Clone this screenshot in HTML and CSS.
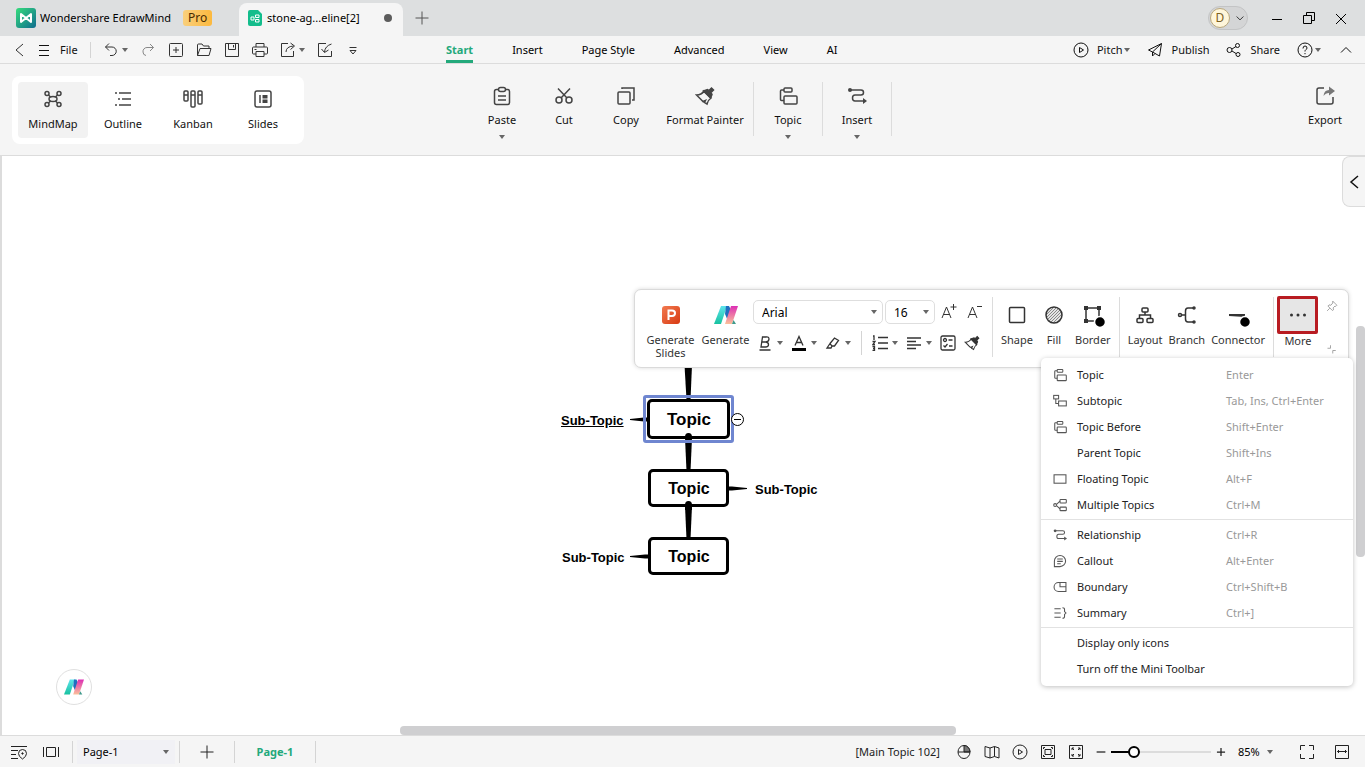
FILE: index.html
```html
<!DOCTYPE html>
<html lang="en">
<head>
    <meta charset="UTF-8">
    <meta name="viewport" content="width=device-width, initial-scale=1.0">
    <title>Wondershare EdrawMind</title>
    <link rel="stylesheet" href="styles.css">
</head>
<body>
    <!-- Icon sprite -->
    <svg class="sprite" aria-hidden="true">
        <defs>
            <linearGradient id="g-app" x1="0" y1="0" x2="1" y2="1">
                <stop offset="0" stop-color="#35dc7c"/><stop offset="1" stop-color="#0f6c8f"/>
            </linearGradient>
            <linearGradient id="g-ppt" x1="0" y1="0" x2="1" y2="1">
                <stop offset="0" stop-color="#f27a50"/><stop offset="1" stop-color="#d83a12"/>
            </linearGradient>
            <linearGradient id="g-teal" x1="0" y1="0" x2="0" y2="1">
                <stop offset="0" stop-color="#5ee3ec"/><stop offset="1" stop-color="#18c2a0"/>
            </linearGradient>
            <linearGradient id="g-pink" x1="0" y1="0" x2="0" y2="1">
                <stop offset="0" stop-color="#dd2fb4"/><stop offset="1" stop-color="#fbc09a"/>
            </linearGradient>
            <pattern id="hatch" width="3" height="3" patternUnits="userSpaceOnUse">
                <rect width="3" height="3" fill="#e4e4e4"/>
                <path d="M0 3L3 0" stroke="#888" stroke-width="1"/>
            </pattern>
        </defs>
        <symbol id="i-ai" viewBox="0 0 24 18">
            <path d="M7 0h6L7 18H0z" fill="url(#g-teal)"/>
            <path d="M12 0h3l4 8-5 7-3-7z" fill="#1f6fc0"/>
            <path d="M17 0h7l-6 18h-7z" fill="url(#g-pink)"/>
            <path d="M18 18l1.500-4 2.500 4z" fill="#3f9a8c"/>
        </symbol>
        <symbol id="i-caret" viewBox="0 0 6 4"><path d="M0 0h6L3 4z" fill="#666" stroke="none"/></symbol>
        <symbol id="i-back" viewBox="0 0 16 16"><path d="M12 2L5 8l7 6"/></symbol>
        <symbol id="i-menu" viewBox="0 0 16 16"><path d="M3 3.500h10M3 8.500h10M3 13.500h10"/></symbol>
        <symbol id="i-undo" viewBox="0 0 16 16"><path d="M6 1.500L2.500 5 6 8.500M2.500 5H9a4 4 0 0 1 0 8.500H7"/></symbol>
        <symbol id="i-redo" viewBox="0 0 16 16"><path d="M10 2l3.500 3.500L10 9M13.500 5.500H7a4 4 0 0 0-4 4.500q0 3 3 3.500"/></symbol>
        <symbol id="i-new" viewBox="0 0 16 16"><rect x="1.500" y="1.500" width="13" height="13" rx="1"/><path d="M8 5v6M5 8h6"/></symbol>
        <symbol id="i-open" viewBox="0 0 16 16"><path d="M1.500 13.500V3q0-1 1-1h3.500l1.500 2h5.500v2.500M1.500 13.500L4 6.500h11l-2 7z"/></symbol>
        <symbol id="i-save" viewBox="0 0 16 16"><path d="M1.500 1.500h13v13h-13zM4.500 1.500v6h7v-6M9.500 3v2.500"/></symbol>
        <symbol id="i-print" viewBox="0 0 16 16"><path d="M4 5V1.500h8V5M4 12H1.500q-1 0-1-1V6q0-1 1-1h13q1 0 1 1v5q0 1-1 1H12M4 9.500h8v5H4zM2.500 7.500h2"/></symbol>
        <symbol id="i-exportfile" viewBox="0 0 16 16"><path d="M8 1.500H1.500v13h12V9M6 10q0-5.500 7.500-6M10.500 1l4 3-4 3.500"/></symbol>
        <symbol id="i-import" viewBox="0 0 16 16"><path d="M9 1.500H1.500v13h13V9M14.500 2Q8 4 7.500 10M4.500 7l3 3.500 4-2.500"/></symbol>
        <symbol id="i-more-down" viewBox="0 0 16 16"><path d="M4.500 5.500h7M5 8.500h6L8 12z"/></symbol>
        <symbol id="i-play" viewBox="0 0 16 16"><circle cx="8" cy="8" r="7"/><path d="M6.500 5.500L10.500 8l-4 2.500z"/></symbol>
        <symbol id="i-send" viewBox="0 0 16 16"><path d="M1.500 8L14.500 1.500 12.500 14 5.500 10zM14.500 1.500L5.500 10v4l2.500-2.500"/></symbol>
        <symbol id="i-share" viewBox="0 0 16 16"><circle cx="3.500" cy="8" r="2.500"/><circle cx="11.500" cy="3.500" r="2"/><circle cx="12" cy="12.500" r="2"/><path d="M6 7l4-2.500M6 9l4 2.500"/></symbol>
        <symbol id="i-help" viewBox="0 0 16 16"><circle cx="8" cy="8" r="7"/><path d="M6 6.500q0-2.500 2-2.500t2 2q0 1-1 1.500T8 9.500M8 11v1.200"/></symbol>
        <symbol id="i-up" viewBox="0 0 16 16"><path d="M3 10.500L8 5.500l5 5"/></symbol>
        <symbol id="i-down" viewBox="0 0 16 16"><path d="M3.500 6L8 10.500 12.500 6"/></symbol>
        <symbol id="i-min" viewBox="0 0 16 16"><path d="M3 9.500h10"/></symbol>
        <symbol id="i-restore" viewBox="0 0 16 16"><path d="M2.500 5.500h8v8h-8zM5.500 5.500v-3h8v8h-3"/></symbol>
        <symbol id="i-close" viewBox="0 0 16 16"><path d="M3 4l10 10M13 4L3 14"/></symbol>
        <symbol id="i-plus" viewBox="0 0 16 16"><path d="M8 1.500v13M1.500 8h13"/></symbol>
        <symbol id="i-minus" viewBox="0 0 16 16"><path d="M1 8h14"/></symbol>

        <symbol id="i-mindmap" viewBox="0 0 20 20"><ellipse cx="10" cy="10" rx="4" ry="2.500"/><circle cx="4" cy="4.500" r="2"/><circle cx="16" cy="4.500" r="2"/><circle cx="4" cy="15.500" r="2"/><circle cx="16" cy="15.500" r="2"/><path d="M5.500 6l2 2M14.500 6l-2 2M5.500 14l2-2M14.500 14l-2-2"/></symbol>
        <symbol id="i-outline" viewBox="0 0 20 20"><path d="M2 4h2M6 4h12M5 10h2M9 10h9M2 16h2M6 16h12"/></symbol>
        <symbol id="i-kanban" viewBox="0 0 20 20"><rect x="1" y="2" width="4" height="10" rx="1"/><rect x="8" y="2" width="4" height="16" rx="1"/><rect x="15" y="2" width="4" height="13" rx="1"/><path d="M1 6h4M8 6h4M15 6h4"/></symbol>
        <symbol id="i-slides" viewBox="0 0 20 20"><rect x="2" y="2" width="16" height="16" rx="2"/><path d="M7 6v8"/><path d="M9.500 6h5v3.500h-5zM9.500 10.500h5V14h-5z" fill="currentColor" stroke="none"/></symbol>
        <symbol id="i-paste" viewBox="0 0 20 20"><rect x="2.500" y="3.500" width="15" height="15" rx="2"/><rect x="6.500" y="1.500" width="7" height="4" rx="2" fill="#f5f5f5"/><path d="M6 10h8M6 14h8"/></symbol>
        <symbol id="i-cut" viewBox="0 0 20 20"><circle cx="5" cy="14" r="3"/><circle cx="15" cy="14" r="3"/><path d="M4 2.500l9 9.500M16 2.500L7 12"/></symbol>
        <symbol id="i-copy" viewBox="0 0 20 20"><rect x="2" y="6" width="12" height="12" rx="1"/><path d="M6 3V2h12v12h-2"/></symbol>
        <symbol id="i-brush" viewBox="0 0 20 20"><path d="M1.500 9q5 0 7.500-4l7 7q-3 2-4 6l-2.500-1.500 1-2-2.500 1L6 13.500 1.500 9z"/><path d="M8.500 5l4-1.500 1.500 1 2.500-2.500 2 2L16 6.500l1 2L15.500 12z" fill="currentColor"/></symbol>
        <symbol id="i-topic" viewBox="0 0 20 20"><rect x="6" y="2" width="8" height="4" rx="1"/><rect x="6" y="10" width="13" height="8" rx="1"/><path d="M6 4H3.500q-1 0-1 1v8.500q0 1 1 1H6"/></symbol>
        <symbol id="i-subtopic" viewBox="0 0 20 20"><rect x="1" y="2" width="7" height="5"/><rect x="8" y="10" width="11" height="7"/><path d="M4 7v6.500h4"/></symbol>
        <symbol id="i-relation" viewBox="0 0 20 20"><path d="M3 4h11q2.500 0 2.500 2.500T14 9H8q-2.500 0-2.500 3T8 15h9"/><circle cx="3" cy="4" r="2" fill="currentColor" stroke="none"/><path d="M16 12l4 3-4 3z" fill="currentColor" stroke="none"/></symbol>
        <symbol id="i-export" viewBox="0 0 20 20"><path d="M9 2H4q-2 0-2 2v12q0 2 2 2h12q2 0 2-2v-5"/><path d="M8.500 10q.5-6 5.500-6V.5L20 5l-6 4.500V7q-3.500 0-5.500 3z" fill="#777" stroke="none"/></symbol>

        <symbol id="i-grow" viewBox="0 0 16 16"><path d="M1 14L5.500 3 10 14M2.500 10.500h6M12.500 0v6M9.500 3h6"/></symbol>
        <symbol id="i-shrink" viewBox="0 0 16 16"><path d="M1 14L5.500 3 10 14M2.500 10.500h6M10 2.500h5"/></symbol>
        <symbol id="i-bold" viewBox="0 0 16 16"><path d="M5.500 2L4 12h4.500q3 0 3-2.500Q11.500 7.500 9 7q3-.5 3-3t-3-2zM5 7h4M2.500 15h11"/></symbol>
        <symbol id="i-color" viewBox="0 0 16 16"><path d="M4 10.500L8 1.500l4 9M5.500 7.500h5"/><path d="M1 13h14v3H1z" fill="#000" stroke="none"/></symbol>
        <symbol id="i-pen" viewBox="0 0 16 16"><path d="M2 13h4l1-2-2-2.500zM5 8.500L9.500 3l4 2.500L9.500 11H7"/></symbol>
        <symbol id="i-list" viewBox="0 0 16 16"><path d="M6 2.500h10M6 8h10M6 13.500h10M1 1h1v4M.500 6.500H3L1 9.500h2M.500 11.500h2v4h-2M1 13.500h1"/></symbol>
        <symbol id="i-align" viewBox="0 0 16 16"><path d="M1 3h14M1 6.500h9M1 10h14M1 13.500h9"/></symbol>
        <symbol id="i-tasks" viewBox="0 0 16 16"><rect x="1" y="1" width="14" height="14" rx="1.500"/><circle cx="5" cy="5" r="1.500"/><path d="M8.500 5h4M3.500 10.500l1.500 1.500 2.500-3M9 11h3.500"/></symbol>
        <symbol id="i-shape" viewBox="0 0 20 20"><rect x="2.500" y="2.500" width="15" height="15" rx="1"/></symbol>
        <symbol id="i-fill" viewBox="0 0 20 20"><circle cx="10" cy="10" r="8" fill="url(#hatch)"/></symbol>
        <symbol id="i-border" viewBox="0 0 24 24"><path d="M5 5h13v13H5z"/><path d="M3 3h4v4H3zM16 3h4v4h-4zM3 16h4v4H3z" fill="currentColor" stroke="none"/><circle cx="19" cy="19" r="5.500" fill="#000" stroke="#fff"/></symbol>
        <symbol id="i-layout" viewBox="0 0 20 20"><rect x="7" y="3" width="6" height="4" rx="1"/><rect x="2" y="13.500" width="6" height="4" rx="1"/><rect x="12" y="13.500" width="6" height="4" rx="1"/><path d="M10 7v3M4.500 13.500V10h11v3.500"/></symbol>
        <symbol id="i-branch" viewBox="0 0 20 20"><path d="M4 10h4.500M17 3h-6q-2.500 0-2.500 3v8q0 3 2.500 3h6"/><circle cx="3" cy="10" r="1.500"/><circle cx="17" cy="3" r="1" /><circle cx="17" cy="17" r="1"/></symbol>
        <symbol id="i-connector" viewBox="0 0 24 24"><path d="M3 11h16v3L3 13z" fill="#333" stroke="none"/><circle cx="19" cy="19" r="5.500" fill="#000" stroke="#fff"/></symbol>
        <symbol id="i-dots" viewBox="0 0 20 20"><circle cx="3.500" cy="10" r="1.500"/><circle cx="10" cy="10" r="1.500"/><circle cx="16.500" cy="10" r="1.500"/></symbol>
        <symbol id="i-pin" viewBox="0 0 16 16"><path d="M9 1.500L14.500 7 13 8.500l-1-.5-2.500 2.500.5 2.500-1.500 1L2.500 8 4 6.500 6.500 7 9 4zM5 11l-3.500 3.500"/></symbol>
        <symbol id="i-resize" viewBox="0 0 16 16"><path d="M2 7h4V3M9 14v-4h4"/></symbol>

        <symbol id="i-floating" viewBox="0 0 20 20"><rect x="1.500" y="4" width="17" height="12"/></symbol>
        <symbol id="i-multiple" viewBox="0 0 20 20"><circle cx="3" cy="10" r="2"/><rect x="10" y="2" width="9" height="5" rx="1"/><rect x="10" y="13" width="9" height="5" rx="1"/><path d="M5 9l5-4.500M5 11l5 4.500"/></symbol>
        <symbol id="i-callout" viewBox="0 0 20 20"><path d="M2 18V10a8 8 0 1 1 8 8zM6 7h8M6 10.500h8M6 14h5"/></symbol>
        <symbol id="i-boundary" viewBox="0 0 20 20"><path d="M18.500 3.500v13H8a6.500 6.500 0 0 1 0-13zM10 3.500v6h8.500"/></symbol>
        <symbol id="i-summary" viewBox="0 0 20 20"><path d="M2 4h9M2 10h9M2 16h9M13.500 2.500q3 0 3 2.500v3l2 2-2 2v3q0 2.500-3 2.500"/></symbol>

        <symbol id="i-locate" viewBox="0 0 16 16"><path d="M0 2.500h16M0 6.500h7M0 10.500h5M0 14.500h7M11.500 15q-4-2.500-4-5.500a4 4 0 0 1 8 0q0 3-4 5.500z"/><circle cx="11.500" cy="9.500" r=".7" fill="currentColor"/></symbol>
        <symbol id="i-pages" viewBox="0 0 16 16"><path d="M.5 3v10M15.500 3v10M3.500 3.500h9v9h-9z"/></symbol>
        <symbol id="i-mouse" viewBox="0 0 16 16"><ellipse cx="8" cy="8" rx="6" ry="6.500"/><path d="M8 1.500a6 6.500 0 0 1 6 6.500H8z" fill="#777"/><path d="M2 8h12"/></symbol>
        <symbol id="i-map" viewBox="0 0 16 16"><path d="M1 2.500l5 1.500 4.500-1.500L15 4v10l-4.500-1.500L6 14l-5-1.500zM6 4v10M10.500 2.500v10"/></symbol>
        <symbol id="i-fitpage" viewBox="0 0 16 16"><path d="M1.500 1.500h13v13h-13zM5 5.500h6v5H5zM3.500 5V3.500H5M11 3.500h1.500V5M3.500 11v1.500H5M12.500 11v1.500H11"/></symbol>
        <symbol id="i-fitall" viewBox="0 0 16 16"><path d="M1.500 1.500h13v13h-13zM4 6V4h2M10 4h2v2M4 10v2h2M12 10v2h-2M4 4l2 2M12 4l-2 2M4 12l2-2M12 12l-2-2"/></symbol>
        <symbol id="i-full" viewBox="0 0 16 16"><path d="M1.500 6V1.500H6M10 1.500h4.500V6M1.500 10v4.500H6M14.500 10v4.500H10"/></symbol>
        <symbol id="i-width" viewBox="0 0 16 16"><path d="M1.500 1.500h13v13h-13zM3.500 7.500h9M5 6L3.500 7.500 5 9M11 6l1.500 1.500L11 9"/></symbol>
    </svg>

    <div class="app">
        <!-- Title bar -->
        <header class="titlebar">
            <div class="brand">
                <svg class="app-logo" viewBox="0 0 20 20"><rect width="20" height="20" rx="3" fill="url(#g-app)"/><path d="M5 14V6l5 4 5-4v8l-5-4z" fill="none" stroke="#fff" stroke-width="2" stroke-linejoin="round"/></svg>
                <span>Wondershare EdrawMind</span>
                <span class="pro">Pro</span>
            </div>
            <div class="doc-tab">
                <svg class="doc-icon" viewBox="0 0 14 16"><path d="M2 0h8l4 4v10q0 2-2 2H2q-2 0-2-2V2q0-2 2-2z" fill="#13bd8c"/><path d="M3 7h3v3H3zM7.500 5H11v2.500H7.500zM7.500 9.500H11V12H7.500z" fill="none" stroke="#fff"/></svg>
                <span>stone-ag...eline[2]</span>
                <span class="unsaved"></span>
            </div>
            <button class="new-tab" aria-label="New tab"><svg class="icon"><use href="#i-plus"/></svg></button>
            <div class="window-controls">
                <button class="account"><span class="avatar">D</span><svg class="icon small"><use href="#i-down"/></svg></button>
                <button aria-label="Minimize"><svg class="icon"><use href="#i-min"/></svg></button>
                <button aria-label="Restore"><svg class="icon"><use href="#i-restore"/></svg></button>
                <button aria-label="Close"><svg class="icon"><use href="#i-close"/></svg></button>
            </div>
        </header>

        <!-- Menu bar -->
        <nav class="menubar">
            <div class="quick">
                <button aria-label="Back"><svg class="icon"><use href="#i-back"/></svg></button>
                <button class="file"><svg class="icon"><use href="#i-menu"/></svg>File</button>
                <span class="bar-sep"></span>
                <button class="with-caret" aria-label="Undo"><svg class="icon"><use href="#i-undo"/></svg><svg class="caret"><use href="#i-caret"/></svg></button>
                <button class="muted" aria-label="Redo"><svg class="icon"><use href="#i-redo"/></svg></button>
                <button aria-label="New"><svg class="icon"><use href="#i-new"/></svg></button>
                <button aria-label="Open"><svg class="icon"><use href="#i-open"/></svg></button>
                <button aria-label="Save"><svg class="icon"><use href="#i-save"/></svg></button>
                <button aria-label="Print"><svg class="icon"><use href="#i-print"/></svg></button>
                <button class="with-caret" aria-label="Export"><svg class="icon"><use href="#i-exportfile"/></svg><svg class="caret"><use href="#i-caret"/></svg></button>
                <button aria-label="Import"><svg class="icon"><use href="#i-import"/></svg></button>
                <button aria-label="Customize"><svg class="icon"><use href="#i-more-down"/></svg></button>
            </div>
            <div class="tabs">
                <button class="active">Start</button>
                <button>Insert</button>
                <button>Page Style</button>
                <button>Advanced</button>
                <button>View</button>
                <button>AI</button>
            </div>
            <div class="actions">
                <button><svg class="icon"><use href="#i-play"/></svg>Pitch<svg class="caret"><use href="#i-caret"/></svg></button>
                <button><svg class="icon"><use href="#i-send"/></svg>Publish</button>
                <button><svg class="icon"><use href="#i-share"/></svg>Share</button>
                <button class="help" aria-label="Help"><svg class="icon"><use href="#i-help"/></svg><svg class="caret"><use href="#i-caret"/></svg></button>
                <button aria-label="Collapse"><svg class="icon"><use href="#i-up"/></svg></button>
            </div>
        </nav>

        <!-- Ribbon -->
        <section class="ribbon">
            <div class="views">
                <button class="active"><svg class="icon big"><use href="#i-mindmap"/></svg>MindMap</button>
                <button><svg class="icon big"><use href="#i-outline"/></svg>Outline</button>
                <button><svg class="icon big"><use href="#i-kanban"/></svg>Kanban</button>
                <button><svg class="icon big"><use href="#i-slides"/></svg>Slides</button>
            </div>
            <div class="tools">
                <button><svg class="icon big"><use href="#i-paste"/></svg>Paste<svg class="caret"><use href="#i-caret"/></svg></button>
                <button><svg class="icon big"><use href="#i-cut"/></svg>Cut</button>
                <button><svg class="icon big"><use href="#i-copy"/></svg>Copy</button>
                <button class="wide"><svg class="icon big"><use href="#i-brush"/></svg>Format Painter</button>
                <span class="tool-sep"></span>
                <button class="mid"><svg class="icon big"><use href="#i-topic"/></svg>Topic<svg class="caret"><use href="#i-caret"/></svg></button>
                <span class="tool-sep"></span>
                <button class="mid"><svg class="icon big"><use href="#i-relation"/></svg>Insert<svg class="caret"><use href="#i-caret"/></svg></button>
                <span class="tool-sep"></span>
            </div>
            <div class="tools end">
                <button><svg class="icon big"><use href="#i-export"/></svg>Export</button>
            </div>
        </section>

        <!-- Canvas -->
        <main class="canvas">
            <svg class="links" width="300" height="220" viewBox="545 365 300 220">
                <path d="M684.500 365h7.500l-1.500 35h-4z"/>
                <path d="M685 438a3.500 4 0 0 1 7 0l-1.500 33h-4z"/>
                <path d="M685 506a3.500 4 0 0 1 7 0l-1.500 33h-4z"/>
                <path d="M630 419l14-1.500h4v4h-4l-14-1.500z"/>
                <path d="M747 488l-15-1.500h-4v4h4l15-1.500z"/>
                <path d="M630 556l15-1.500h4v4h-4l-15-1.500z"/>
            </svg>
            <div class="node node-a">Topic</div>
            <div class="selection"></div>
            <button class="collapse" aria-label="Collapse branch"></button>
            <div class="node node-b">Topic</div>
            <div class="node node-c">Topic</div>
            <svg class="joints" width="20" height="90" viewBox="679 430 20 90">
                <path d="M685 439v-2a3.500 4 0 0 1 7 0v2zM685 510v-5a3.500 4 0 0 1 7 0v5z"/>
            </svg>
            <div class="sub sub-a">Sub-Topic</div>
            <div class="sub sub-b">Sub-Topic</div>
            <div class="sub sub-c">Sub-Topic</div>

            <button class="panel-toggle" aria-label="Open panel"><svg class="icon"><use href="#i-back"/></svg></button>
            <button class="assistant" aria-label="AI assistant"><svg class="ai"><use href="#i-ai"/></svg></button>
            <div class="scroll-v"></div>
            <div class="scroll-h"></div>

            <!-- Mini toolbar -->
            <div class="mini">
                <button class="mini-btn gen"><svg class="icon big" viewBox="0 0 20 20"><rect x="1" y="1" width="18" height="18" rx="3" fill="url(#g-ppt)" stroke="none"/><path d="M7.500 15V5.500H11q3 0 3 2.700T11 11H7.500" stroke="#fff" stroke-width="2"/></svg>Generate Slides</button>
                <button class="mini-btn gen"><svg class="ai"><use href="#i-ai"/></svg>Generate</button>
                <div class="font-tools">
                    <div class="font-row">
                        <span class="pick font-name"><select aria-label="Font"><option>Arial</option></select><svg class="caret"><use href="#i-caret"/></svg></span>
                        <span class="pick font-size"><select aria-label="Font size"><option>16</option></select><svg class="caret"><use href="#i-caret"/></svg></span>
                        <button aria-label="Increase font"><svg class="icon"><use href="#i-grow"/></svg></button>
                        <button aria-label="Decrease font"><svg class="icon"><use href="#i-shrink"/></svg></button>
                    </div>
                    <div class="font-row marks">
                        <button class="style" aria-label="Bold"><svg class="icon"><use href="#i-bold"/></svg><svg class="caret"><use href="#i-caret"/></svg></button>
                        <button class="style" aria-label="Font color"><svg class="icon"><use href="#i-color"/></svg><svg class="caret"><use href="#i-caret"/></svg></button>
                        <button class="style" aria-label="Highlight"><svg class="icon"><use href="#i-pen"/></svg><svg class="caret"><use href="#i-caret"/></svg></button>
                        <span class="bar-sep"></span>
                        <button class="style" aria-label="List"><svg class="icon"><use href="#i-list"/></svg><svg class="caret"><use href="#i-caret"/></svg></button>
                        <button class="style" aria-label="Align"><svg class="icon"><use href="#i-align"/></svg><svg class="caret"><use href="#i-caret"/></svg></button>
                        <button aria-label="Tasks"><svg class="icon"><use href="#i-tasks"/></svg></button>
                        <button aria-label="Format painter"><svg class="icon"><use href="#i-brush"/></svg></button>
                    </div>
                </div>
                <span class="mini-sep"></span>
                <div class="mini-group">
                    <button class="mini-btn"><svg class="icon big"><use href="#i-shape"/></svg>Shape</button>
                    <button class="mini-btn"><svg class="icon big"><use href="#i-fill"/></svg>Fill</button>
                    <button class="mini-btn"><svg class="icon huge"><use href="#i-border"/></svg>Border</button>
                </div>
                <span class="mini-sep"></span>
                <div class="mini-group tight">
                    <button class="mini-btn"><svg class="icon big"><use href="#i-layout"/></svg>Layout</button>
                    <button class="mini-btn"><svg class="icon big"><use href="#i-branch"/></svg>Branch</button>
                    <button class="mini-btn"><svg class="icon huge"><use href="#i-connector"/></svg>Connector</button>
                </div>
                <span class="mini-sep"></span>
                <button class="mini-btn more"><span class="more-box"><svg class="icon big"><use href="#i-dots"/></svg></span>More</button>
                <div class="mini-side">
                    <button aria-label="Pin"><svg class="icon small"><use href="#i-pin"/></svg></button>
                    <svg class="icon small"><use href="#i-resize"/></svg>
                </div>
            </div>

            <!-- More menu -->
            <div class="menu" role="menu">
                <button class="item" role="menuitem"><svg class="icon"><use href="#i-topic"/></svg><span>Topic</span><kbd>Enter</kbd></button>
                <button class="item" role="menuitem"><svg class="icon"><use href="#i-subtopic"/></svg><span>Subtopic</span><kbd>Tab, Ins, Ctrl+Enter</kbd></button>
                <button class="item" role="menuitem"><svg class="icon"><use href="#i-topic"/></svg><span>Topic Before</span><kbd>Shift+Enter</kbd></button>
                <button class="item" role="menuitem"><i></i><span>Parent Topic</span><kbd>Shift+Ins</kbd></button>
                <button class="item" role="menuitem"><svg class="icon"><use href="#i-floating"/></svg><span>Floating Topic</span><kbd>Alt+F</kbd></button>
                <button class="item" role="menuitem"><svg class="icon"><use href="#i-multiple"/></svg><span>Multiple Topics</span><kbd>Ctrl+M</kbd></button>
                <hr>
                <button class="item" role="menuitem"><svg class="icon"><use href="#i-relation"/></svg><span>Relationship</span><kbd>Ctrl+R</kbd></button>
                <button class="item" role="menuitem"><svg class="icon"><use href="#i-callout"/></svg><span>Callout</span><kbd>Alt+Enter</kbd></button>
                <button class="item" role="menuitem"><svg class="icon"><use href="#i-boundary"/></svg><span>Boundary</span><kbd>Ctrl+Shift+B</kbd></button>
                <button class="item" role="menuitem"><svg class="icon"><use href="#i-summary"/></svg><span>Summary</span><kbd>Ctrl+]</kbd></button>
                <hr>
                <button class="item" role="menuitem"><i></i><span>Display only icons</span></button>
                <button class="item" role="menuitem"><i></i><span>Turn off the Mini Toolbar</span></button>
            </div>
        </main>

        <!-- Status bar -->
        <footer class="statusbar">
            <button aria-label="Locate"><svg class="icon"><use href="#i-locate"/></svg></button>
            <button class="pages" aria-label="Pages"><svg class="icon"><use href="#i-pages"/></svg></button>
            <span class="bar-sep"></span>
            <span class="pick page-pick"><select aria-label="Page"><option>Page-1</option></select><svg class="caret"><use href="#i-caret"/></svg></span>
            <span class="bar-sep"></span>
            <button class="add-page" aria-label="Add page"><svg class="icon"><use href="#i-plus"/></svg></button>
            <span class="bar-sep"></span>
            <button class="page-tab">Page-1</button>
            <span class="bar-sep"></span>
            <div class="status-right">
                <span>[Main Topic 102]</span>
                <div class="status-icons">
                    <button aria-label="Mouse mode"><svg class="icon"><use href="#i-mouse"/></svg></button>
                    <button aria-label="Map"><svg class="icon"><use href="#i-map"/></svg></button>
                    <button aria-label="Present"><svg class="icon"><use href="#i-play"/></svg></button>
                    <button aria-label="Fit page"><svg class="icon"><use href="#i-fitpage"/></svg></button>
                    <button aria-label="Fit all"><svg class="icon"><use href="#i-fitall"/></svg></button>
                </div>
                <div class="zoom">
                    <button aria-label="Zoom out"><svg class="icon tiny"><use href="#i-minus"/></svg></button>
                    <input type="range" min="0" max="100" value="19" aria-label="Zoom">
                    <button aria-label="Zoom in"><svg class="icon tiny"><use href="#i-plus"/></svg></button>
                </div>
                <span class="pick zoom-pick"><select aria-label="Zoom level"><option>85%</option></select><svg class="caret"><use href="#i-caret"/></svg></span>
                <button class="full" aria-label="Full screen"><svg class="icon"><use href="#i-full"/></svg></button>
                <button aria-label="Fit width"><svg class="icon"><use href="#i-width"/></svg></button>
            </div>
        </footer>
    </div>
</body>
</html>
```

FILE: styles.css
```css
* {
    box-sizing: border-box;
}
body {
    margin: 0;
    font-family: "Noto Sans", "Open Sans", sans-serif;
    font-size: 11px;
    line-height: 16px;
    color: #111;
    background: #f5f5f5;
}
button, select {
    font: inherit;
    color: inherit;
    background: none;
    border: 0;
    padding: 0;
    margin: 0;
}
button {
    display: flex;
    align-items: center;
    justify-content: center;
    white-space: nowrap;
}
.sprite {
    position: absolute;
    width: 0;
    height: 0;
}
.icon {
    width: 16px;
    height: 16px;
    flex: none;
    fill: none;
    stroke: currentColor;
}
.icon.big {
    width: 20px;
    height: 20px;
}
.icon.huge {
    width: 24px;
    height: 24px;
}
.icon.small {
    width: 12px;
    height: 12px;
}
.icon.tiny {
    width: 10px;
    height: 10px;
    stroke-width: 2;
}
.caret {
    width: 6px;
    height: 4px;
    flex: none;
}
.ai {
    width: 24px;
    height: 18px;
}
.bar-sep {
    width: 1px;
    height: 16px;
    background: #d4d4d4;
}
.app {
    display: flex;
    flex-direction: column;
    height: 100vh;
    overflow: hidden;
}

/* Title bar */
.titlebar {
    display: flex;
    flex: none;
    height: 36px;
    background: #dddfe0;
    color: #000;
}
.brand {
    display: flex;
    align-items: center;
    width: 239px;
    padding-left: 16px;
    gap: 4px;
}
.app-logo {
    width: 20px;
    height: 20px;
}
.pro {
    margin-left: 8px;
    padding: 0 5px;
    border-radius: 3px;
    background: linear-gradient(90deg, #f9cf7c, #fcb93e);
    color: #4a2c00;
    font-size: 12px;
}
.doc-tab {
    display: flex;
    align-items: center;
    width: 164px;
    margin-top: 3px;
    padding: 0 11px 3px 9px;
    gap: 5px;
    background: #f5f5f5;
    border-radius: 8px 8px 0 0;
}
.doc-icon {
    width: 14px;
    height: 16px;
}
.unsaved {
    width: 8px;
    height: 8px;
    margin-left: auto;
    border-radius: 50%;
    background: #5c5c5c;
}
.new-tab {
    width: 38px;
    color: #555;
}
.window-controls {
    display: flex;
    align-items: center;
    gap: 16px;
    margin-left: auto;
    padding-right: 16px;
}
.account {
    height: 24px;
    width: 40px;
    gap: 4px;
    margin-right: 5px;
    border: 1px solid #c3c4c5;
    border-radius: 12px;
    background: #d4d5d6;
}
.avatar {
    width: 20px;
    height: 20px;
    border: 1px solid #b9a77c;
    border-radius: 50%;
    background: #fff6da;
    color: #7c6020;
    font-size: 12px;
    line-height: 18px;
}

/* Menu bar */
.menubar {
    display: flex;
    flex: none;
    height: 28px;
    border-bottom: 1px solid #dcdcdc;
}
.quick {
    display: flex;
    align-items: center;
    width: 446px;
    padding: 1px 0 0 11px;
    gap: 12px;
    color: #333;
}
.quick .file {
    gap: 8px;
    margin-left: -3px;
    color: #111;
}
.with-caret {
    gap: 3px;
}
.muted {
    color: #888;
}
.tabs {
    display: flex;
    gap: 39px;
    color: #000;
}
.tabs button {
    border-bottom: 3px solid transparent;
    padding-top: 4px;
}
.tabs .active {
    color: #23a97b;
    font-weight: bold;
    border-color: #23a97b;
}
.actions {
    display: flex;
    align-items: center;
    gap: 17px;
    margin-left: auto;
    padding: 1px 11px 0 0;
}
.actions button {
    gap: 8px;
}
.actions .caret {
    margin-left: -6px;
}

/* Ribbon */
.ribbon {
    display: grid;
    grid-template-columns: 1fr auto 1fr;
    flex: none;
    height: 92px;
    padding: 12px 14px 12px 12px;
    border-bottom: 1px solid #dcdcdc;
}
.ribbon .icon {
    color: #444;
    stroke-width: 1.5;
}
.views {
    display: flex;
    justify-self: start;
    height: 68px;
    padding: 6px;
    background: #fff;
    border-radius: 8px;
}
.views button {
    flex-direction: column;
    gap: 7px;
    width: 70px;
    padding-top: 1px;
    border-radius: 4px;
}
.views .active {
    background: #f2f2f2;
}
.tools {
    display: flex;
}
.tools button {
    flex-direction: column;
    justify-content: flex-start;
    gap: 6px;
    width: 62px;
    padding-top: 10px;
}
.tools .caret {
    margin-top: 1px;
}
.tools .wide {
    width: 96px;
}
.tools .mid {
    width: 68px;
}
.tools.end {
    justify-content: flex-end;
}
.tools.end button {
    width: 52px;
}
.tool-sep {
    width: 1px;
    height: 54px;
    margin-top: 6px;
    background: #dcdcdc;
}

/* Canvas */
.canvas {
    position: relative;
    flex: 1;
    min-height: 0;
    background: #fff;
    box-shadow: inset 2px 0 #dcdcdc;
}
.links {
    position: absolute;
    left: 545px;
    top: 209px;
}
.joints {
    position: absolute;
    left: 679px;
    top: 274px;
}
.node {
    position: absolute;
    display: flex;
    align-items: center;
    justify-content: center;
    width: 81px;
    height: 38px;
    padding: 1px 0 0 1px;
    border: 3px solid #000;
    border-radius: 5px;
    background: #fff;
    font: bold 16px/20px "Liberation Sans", Arial, sans-serif;
    color: #000;
}
.node-a {
    left: 647px;
    top: 243px;
    width: 83px;
    height: 40px;
    font-size: 17px;
}
.node-b {
    left: 648px;
    top: 313px;
}
.node-c {
    left: 648px;
    top: 381px;
}
.selection {
    position: absolute;
    left: 643px;
    top: 239px;
    width: 91px;
    height: 48px;
    border: 3px solid #6f86d0;
    border-radius: 3px;
}
.collapse {
    position: absolute;
    left: 731px;
    top: 257px;
    width: 13px;
    height: 13px;
    border: 1px solid #000;
    border-radius: 50%;
    background: #fff;
}
.collapse::before {
    content: "";
    width: 7px;
    height: 1px;
    background: #000;
}
.sub {
    position: absolute;
    font: bold 13px/16px "Liberation Sans", Arial, sans-serif;
    color: #000;
}
.sub-a {
    left: 561px;
    top: 257px;
    text-decoration: underline;
}
.sub-b {
    left: 755px;
    top: 326px;
}
.sub-c {
    left: 562px;
    top: 394px;
}
.panel-toggle {
    position: absolute;
    right: 0;
    top: 0;
    width: 23px;
    height: 51px;
    border: 1px solid #dcdcdc;
    border-right: 0;
    border-radius: 8px 0 0 8px;
    background: #f5f5f5;
}
.panel-toggle .icon {
    stroke-width: 1.5;
}
.assistant {
    position: absolute;
    left: 56px;
    bottom: 30px;
    width: 36px;
    height: 36px;
    border: 1px solid #e0e0e0;
    border-radius: 50%;
    background: #fff;
}
.assistant .ai {
    width: 20px;
    height: 16px;
}
.scroll-v {
    position: absolute;
    right: 0;
    top: 170px;
    width: 9px;
    height: 231px;
    border-radius: 4px;
    background: #cfcfd1;
}
.scroll-h {
    position: absolute;
    left: 400px;
    bottom: 0;
    width: 556px;
    height: 9px;
    border-radius: 4px;
    background: #cfcfd1;
}

/* Mini toolbar */
.mini {
    position: absolute;
    left: 634px;
    top: 133px;
    display: flex;
    height: 79px;
    padding: 6px 10px 0 8px;
    background: #fff;
    border: 1px solid #dadada;
    border-radius: 7px;
    box-shadow: 0 0 4px rgba(0, 0, 0, 0.15);
    color: #333;
    line-height: 13px;
}
.mini-btn {
    flex-direction: column;
    justify-content: flex-start;
    gap: 8px;
    padding-top: 9px;
}
.mini-btn .icon {
    stroke-width: 1.5;
}
.mini-btn .huge {
    margin: -2px;
}
.gen {
    width: 55px;
    white-space: normal;
}
.gen .ai {
    margin: 1px 0;
}
.font-tools {
    display: flex;
    flex-direction: column;
    width: 239px;
    padding-top: 4px;
}
.font-row {
    display: flex;
    align-items: center;
    gap: 2px;
}
.font-row button {
    height: 24px;
    width: 24px;
}
.font-row .style {
    width: 34px;
    gap: 4px;
}
.marks {
    gap: 0;
    margin-top: 7px;
}
.marks .bar-sep {
    height: 24px;
    margin: 0 6px;
}
.marks .icon {
    stroke-width: 1.3;
}
.pick {
    position: relative;
    display: flex;
    align-items: center;
}
.pick select {
    appearance: none;
    width: 100%;
    height: 24px;
    padding-left: 8px;
    color: #000;
    font-size: 12px;
}
.pick .caret {
    position: absolute;
    right: 6px;
    pointer-events: none;
}
.font-name select, .font-size select {
    border: 1px solid #dedede;
    border-radius: 5px;
}
.font-name {
    width: 130px;
}
.font-size {
    width: 50px;
}
.mini-sep {
    width: 1px;
    height: 60px;
    margin-top: 1px;
    background: #dcdcdc;
}
.mini-group {
    display: flex;
    gap: 11px;
    padding: 0 8px;
}
.mini-group.tight {
    gap: 6px;
}
.more {
    width: 48px;
    padding-top: 0;
    gap: 0;
}
.more-box {
    display: flex;
    align-items: center;
    justify-content: center;
    width: 41px;
    height: 38px;
    border: 3px solid #b81c22;
    border-radius: 2px;
    background: #e6e6e6;
}
.more .icon {
    fill: #333;
    stroke: none;
}
.mini-side {
    display: flex;
    flex-direction: column;
    justify-content: space-between;
    margin-left: 4px;
    padding: 4px 0 12px;
    color: #888;
}

/* More menu */
.menu {
    position: absolute;
    left: 1041px;
    top: 202px;
    width: 312px;
    padding: 4px 0;
    background: #fff;
    border-radius: 5px;
    box-shadow: 0 1px 5px rgba(0, 0, 0, 0.25);
    color: #222;
}
.item {
    display: grid;
    grid-template-columns: 12px 137px 1fr;
    gap: 12px;
    justify-content: stretch;
    width: 100%;
    height: 26px;
    padding: 0 12px;
    text-align: left;
}
.item .icon {
    width: 14px;
    height: 14px;
    stroke-width: 1.5;
    color: #555;
}
.item kbd {
    font: inherit;
    color: #999;
}
.menu hr {
    height: 1px;
    margin: 1px 0 2px;
    border: 0;
    background: #e2e2e2;
}

/* Status bar */
.statusbar {
    display: flex;
    align-items: center;
    flex: none;
    height: 32px;
    padding: 0 15px 0 11px;
    border-top: 1px solid #dcdcdc;
    color: #222;
}
.statusbar .bar-sep {
    height: 22px;
}
.pages {
    margin: 0 13px 0 16px;
}
.page-pick {
    width: 98px;
    margin: 0 4px;
    background: #f1f1f5;
}
.page-pick select {
    padding-left: 6px;
    font-size: 11px;
}
.add-page {
    width: 54px;
}
.page-tab {
    width: 80px;
    color: #23a97b;
    font-weight: bold;
}
.status-right {
    display: flex;
    align-items: center;
    margin-left: auto;
}
.status-icons {
    display: flex;
    gap: 12px;
    margin: 0 12px 0 16px;
}
.zoom {
    display: flex;
    align-items: center;
    gap: 5px;
}
.zoom input {
    appearance: none;
    width: 100px;
    height: 14px;
    margin: 0;
    background: linear-gradient(90deg, #000 20px, #dcdcdc 20px) center / 100% 2px no-repeat;
}
.zoom input::-webkit-slider-thumb {
    appearance: none;
    width: 12px;
    height: 12px;
    border: 2px solid #000;
    border-radius: 50%;
    background: #fff;
}
.zoom-pick {
    width: 39px;
    margin-left: 12px;
}
.zoom-pick select {
    padding-left: 0;
    font-size: 11px;
}
.zoom-pick .caret {
    right: 4px;
}
.full {
    margin: 0 19px 0 22px;
}
```
